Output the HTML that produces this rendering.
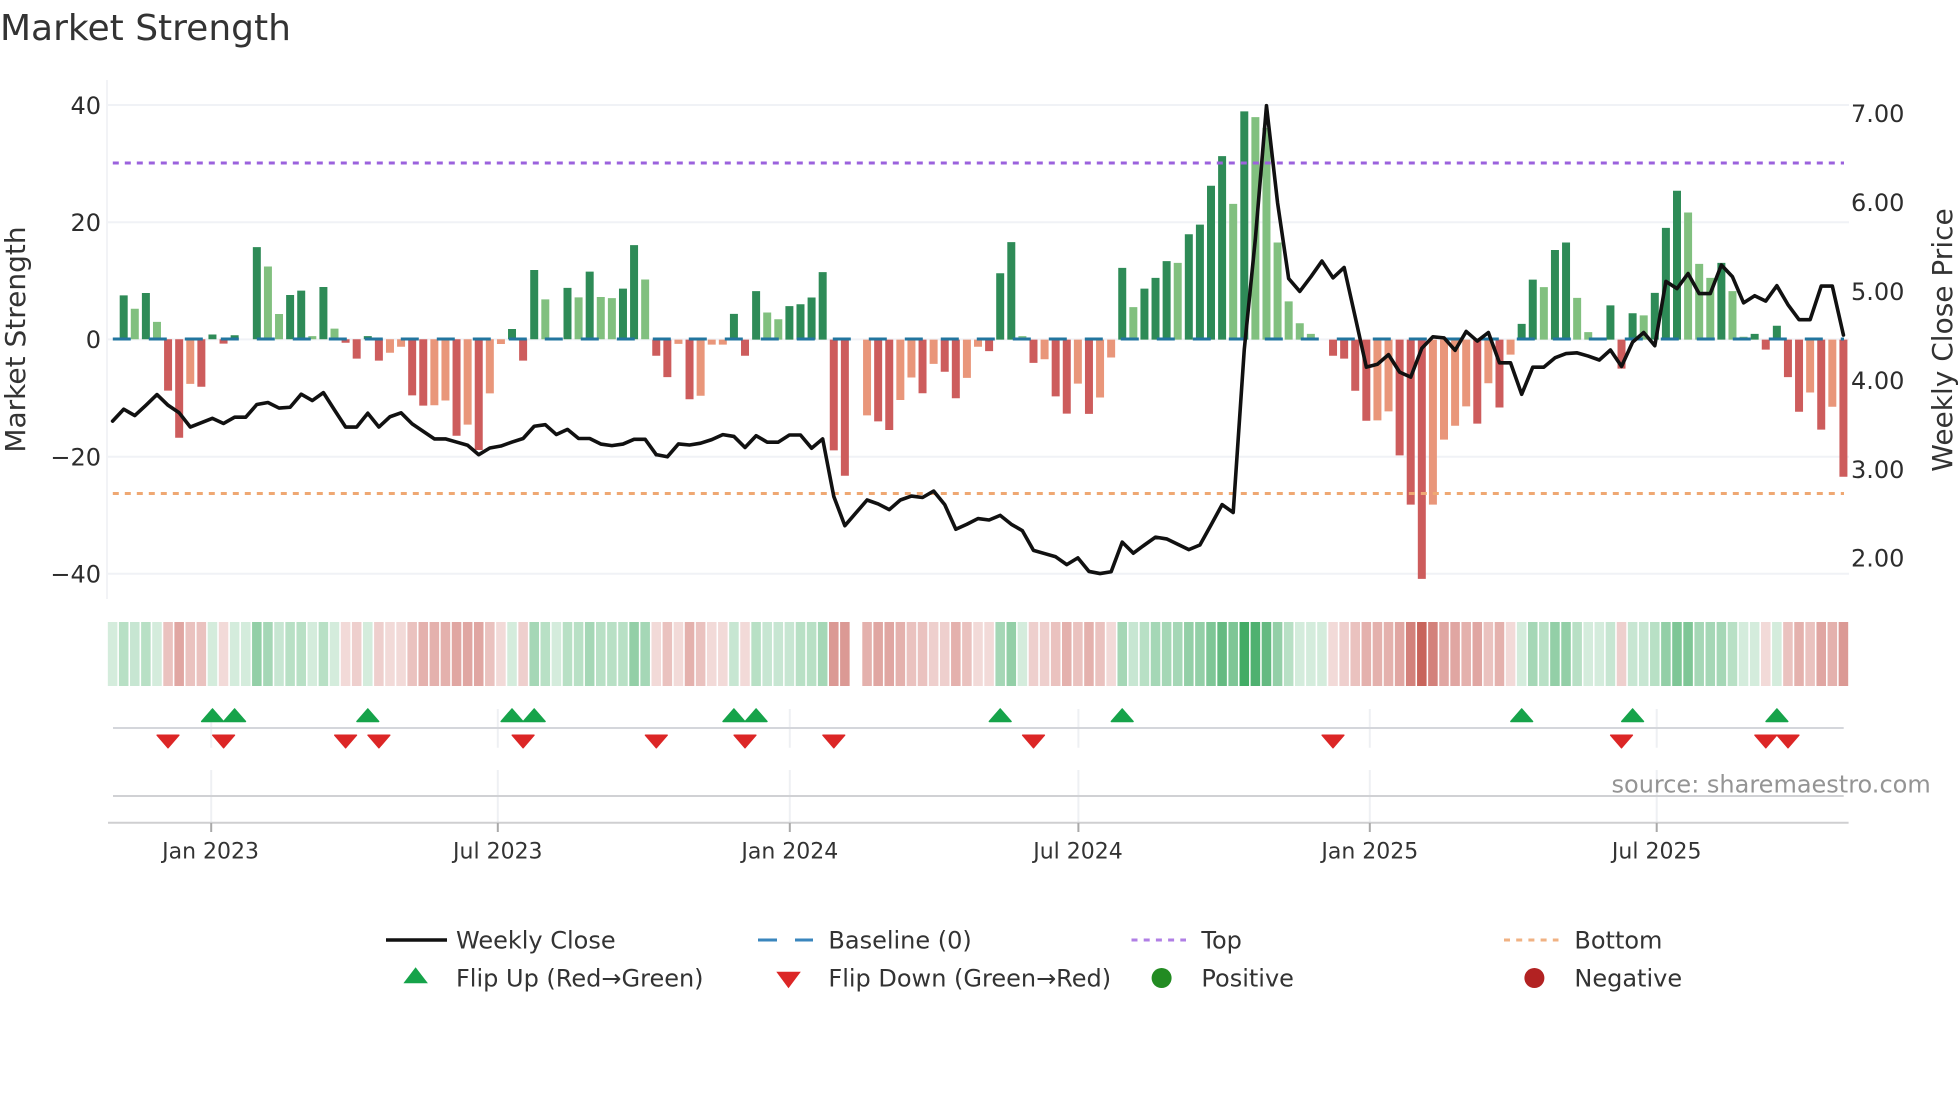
<!DOCTYPE html>
<html>
<head>
<meta charset="utf-8">
<title>Market Strength</title>
<style>
html,body{margin:0;padding:0;background:#fff;width:1960px;height:1102px;overflow:hidden}
svg{display:block}
text{font-family:"DejaVu Sans","Liberation Sans",sans-serif;fill:#2d2d2d}
.t{font-size:24px}
.x{font-size:22px;text-anchor:middle;fill:#333}
.l{font-size:24px;fill:#333}
.b{fill:none;stroke-width:.72}
.h{fill:none;stroke-width:.86}
.p{fill:none;stroke:#111;stroke-width:3.6;stroke-linejoin:round;stroke-linecap:round;vector-effect:non-scaling-stroke}
</style>
</head>
<body>
<svg width="1960" height="1102" viewBox="0 0 1960 1102" xmlns="http://www.w3.org/2000/svg">
<rect width="1960" height="1102" fill="#fff"/>

<!-- grid -->
<path d="M107 80V599" stroke="#f2f3f6" stroke-width="2" fill="none"/>
<path d="M108 105H1849M108 222.2H1849M108 339.4H1849M108 456.7H1849M108 573.8H1849" stroke="#f0f2f6" stroke-width="2" fill="none"/>

<!-- bars A -->
<g transform="matrix(11.095 0 0 .3954 112.6 0)">
<path class="b" stroke="#2e8b57" d="M1 858V747M3 858V741M9 858V846M11 858V848M13 858V625M16 858V746M17 858V735M19 858V726M23 858V850M36 858V832M38 858V683M41 858V728M43 858V687M46 858V730M47 858V620"/>
<path class="b" stroke="#81c07f" d="M2 858V781M4 858V814M14 858V674M15 858V794M18 858V850M20 858V831M39 858V757M42 858V752M44 858V751M45 858V754M48 858V707"/>
<path class="b" stroke="#cd5c5c" d="M5 858V988M6 858V1107M8 858V978M10 858V869M21 858V867M22 858V907M24 858V912M27 858V1000M28 858V1026M31 858V1102M33 858V1138M37 858V912"/>
<path class="b" stroke="#e9967a" d="M7 858V971M25 858V892M26 858V877M29 858V1025M30 858V1013M32 858V1074M34 858V995M35 858V870"/>
</g>
<!-- bars B -->
<g transform="matrix(11.095 0 0 .35714 112.6 60)">
<path class="b" stroke="#2e8b57" d="M56 783V711M58 783V647M61 783V689M62 783V684M63 783V665M64 783V594M80 783V597M81 783V510M91 783V582M93 783V640M94 783V610M95 783V563M97 783V488M98 783V461M99 783V352M100 783V269M102 783V144M127 783V739M128 783V615M130 783V532M131 783V511M135 783V687M137 783V709M139 783V652M140 783V470M141 783V366M145 783V568M148 783V767M150 783V744"/>
<path class="b" stroke="#81c07f" d="M59 783V707M60 783V726M82 783V773M92 783V692M96 783V568M101 783V403M103 783V160M104 783V190M105 783V511M106 783V676M107 783V737M108 783V767M129 783V636M132 783V666M133 783V762M138 783V715M142 783V427M143 783V571M144 783V610M146 783V647M147 783V775"/>
<path class="b" stroke="#cd5c5c" d="M49 783V828M50 783V888M52 783V950M57 783V828M65 783V1093M66 783V1164M69 783V1012M70 783V1036M73 783V933M75 783V873M76 783V947M79 783V815M83 783V848M85 783V942M86 783V990M88 783V991M110 783V828M111 783V836M112 783V926M113 783V1010M116 783V1107M117 783V1245M118 783V1453M123 783V1018M125 783V973M136 783V864M149 783V811M151 783V888M152 783V985M154 783V1035M156 783V1167"/>
<path class="b" stroke="#e9967a" d="M51 783V795M53 783V940M54 783V797M55 783V797M68 783V995M71 783V952M72 783V889M74 783V851M77 783V890M78 783V803M84 783V838M87 783V906M89 783V945M90 783V833M114 783V1009M115 783V984M119 783V1245M120 783V1063M121 783V1024M122 783V970M124 783V905M126 783V825M153 783V931M155 783V971"/>
</g>

<!-- reference lines -->
<path d="M112.8 339H1844" stroke="#22759f" stroke-width="3" stroke-dasharray="18 18" fill="none"/>
<path d="M112.8 163H1844" stroke="#9b62dd" stroke-width="3" stroke-dasharray="6 6" fill="none"/>
<path d="M112.8 493.5H1844" stroke="#efa873" stroke-width="3" stroke-dasharray="6 6" fill="none"/>

<!-- price line -->
<polyline class="p" transform="matrix(11.095 0 0 .3954 112.6 0)" points="0,1065 1,1035 2,1051 3,1025 4,998 5,1025 6,1044 7,1080 8,1069 9,1058 10,1071 11,1055 12,1055 13,1023 14,1018 15,1032 16,1030 17,997 18,1013 19,993 20,1037 21,1080 22,1080 23,1045 24,1080 25,1054 26,1044 27,1072 28,1091 29,1110 30,1110 31,1118 32,1126 33,1150 34,1133 35,1128 36,1118 37,1109 38,1078 39,1074 40,1099 41,1086 42,1109 43,1109 44,1123 45,1127 46,1123 47,1111 48,1111 49,1150"/>
<polyline class="p" transform="matrix(11.095 0 0 .35714 112.6 60)" points="49,1105 50,1111 51,1075 52,1078 53,1073 54,1063 55,1049 56,1054 57,1085 58,1052 59,1070 60,1070 61,1050 62,1050 63,1087 64,1061 65,1222 66,1304 67,1268 68,1232 69,1243 70,1259 71,1232 72,1221 73,1225 74,1207 75,1245 76,1314 77,1300 78,1284 79,1288 80,1275 81,1300 82,1318 83,1373 84,1382 85,1391 86,1413 87,1394 88,1432 89,1438 90,1433 91,1350 92,1381 93,1358 94,1336 95,1341 96,1356 97,1371 98,1358 99,1302 100,1245 101,1267 102,810 103,500 104,128 105,400 106,612 107,648 108,607 109,563 110,610 111,581 112,720 113,860 114,852 115,825 116,874 117,888 118,807 119,775 120,778 121,813 122,760 123,787 124,763 125,848 126,848 127,936 128,860 129,860 130,834 131,822 132,820 133,829 134,840 135,812 136,858 137,790 138,763 139,800 140,620 141,640 142,598 143,654 144,654 145,574 146,607 147,680 148,660 149,675 150,632 151,685 152,727 153,727 154,633 155,633 156,770"/>

<!-- heat strip -->
<g transform="matrix(11.095 0 0 1 112.6 0)">
<path class="h" stroke="rgba(40,160,80,.2)" d="M0 622V686M4 622V686M9 622V686M11 622V686M12 622V686M18 622V686M20 622V686M23 622V686M36 622V686M40 622V686M82 622V686M107 622V686M108 622V686M109 622V686M127 622V686M133 622V686M134 622V686M147 622V686M148 622V686M150 622V686"/>
<path class="h" stroke="rgba(40,160,80,.26)" d="M2 622V686M15 622V686M56 622V686M59 622V686M60 622V686M61 622V686M92 622V686M135 622V686M137 622V686M138 622V686"/>
<path class="h" stroke="rgba(40,160,80,.33)" d="M1 622V686M3 622V686M16 622V686M17 622V686M19 622V686M39 622V686M41 622V686M42 622V686M44 622V686M45 622V686M46 622V686M58 622V686M62 622V686M63 622V686M93 622V686M106 622V686M129 622V686M132 622V686M139 622V686M146 622V686"/>
<path class="h" stroke="rgba(40,160,80,.42)" d="M14 622V686M38 622V686M43 622V686M48 622V686M64 622V686M80 622V686M91 622V686M94 622V686M95 622V686M96 622V686M128 622V686M143 622V686M144 622V686M145 622V686"/>
<path class="h" stroke="rgba(40,160,80,.5)" d="M13 622V686M47 622V686M81 622V686M97 622V686M98 622V686M105 622V686M130 622V686M131 622V686M140 622V686"/>
<path class="h" stroke="rgba(40,160,80,.6)" d="M99 622V686M101 622V686M141 622V686M142 622V686"/>
<path class="h" stroke="rgba(40,160,80,.72)" d="M100 622V686M104 622V686"/>
<path class="h" stroke="rgba(40,160,80,.88)" d="M102 622V686"/>
<path class="h" stroke="rgba(40,160,80,.82)" d="M103 622V686"/>
<path class="h" stroke="rgba(190,70,60,.2)" d="M10 622V686M21 622V686M25 622V686M26 622V686M35 622V686M49 622V686M51 622V686M54 622V686M55 622V686M57 622V686M78 622V686M79 622V686M90 622V686M110 622V686M126 622V686M149 622V686"/>
<path class="h" stroke="rgba(190,70,60,.26)" d="M22 622V686M24 622V686M37 622V686M74 622V686M75 622V686M83 622V686M84 622V686M111 622V686M136 622V686"/>
<path class="h" stroke="rgba(190,70,60,.33)" d="M5 622V686M7 622V686M8 622V686M27 622V686M34 622V686M50 622V686M53 622V686M72 622V686M73 622V686M77 622V686M85 622V686M87 622V686M89 622V686M112 622V686M124 622V686M151 622V686M153 622V686"/>
<path class="h" stroke="rgba(190,70,60,.42)" d="M28 622V686M29 622V686M30 622V686M52 622V686M68 622V686M71 622V686M76 622V686M86 622V686M88 622V686M113 622V686M114 622V686M115 622V686M122 622V686M125 622V686M152 622V686M155 622V686"/>
<path class="h" stroke="rgba(190,70,60,.48)" d="M6 622V686M31 622V686M32 622V686M33 622V686M69 622V686M70 622V686M116 622V686M120 622V686M121 622V686M123 622V686M154 622V686"/>
<path class="h" stroke="rgba(190,70,60,.55)" d="M65 622V686M66 622V686M156 622V686"/>
<path class="h" stroke="rgba(190,70,60,.68)" d="M117 622V686M119 622V686"/>
<path class="h" stroke="rgba(190,70,60,.84)" d="M118 622V686"/>
</g>

<!-- lower panels -->
<path d="M211.2 709V747.7M497.8 709V747.7M789.8 709V747.7M1078.4 709V747.7M1369.8 709V747.7M1656.7 709V747.7M211.2 770V822M497.8 770V822M789.8 770V822M1078.4 770V822M1369.8 770V822M1656.7 770V822" stroke="#eef0f3" stroke-width="2" fill="none"/>
<path d="M113 728H1843.7" stroke="#d4d6db" stroke-width="2" fill="none"/>
<path d="M113 796H1843.7" stroke="#d0d1d4" stroke-width="2" fill="none"/>
<path d="M108 822.7H1848.6" stroke="#cfcfd1" stroke-width="2" fill="none"/>
<path d="M211.2 823V832M497.8 823V832M789.8 823V832M1078.4 823V832M1369.8 823V832M1656.7 823V832" stroke="#a9a9a9" stroke-width="2" fill="none"/>

<!-- flip markers -->
<path fill="#16a34a" stroke="#16a34a" stroke-width="1.4" stroke-linejoin="round" d="M201.6 721.5l10.9-12.6 10.9 12.6zM223.7 721.5l10.9-12.6 10.9 12.6zM356.9 721.5l10.9-12.6 10.9 12.6zM501.1 721.5l10.9-12.6 10.9 12.6zM523.3 721.5l10.9-12.6 10.9 12.6zM723 721.5l10.9-12.6 10.9 12.6zM745.2 721.5l10.9-12.6 10.9 12.6zM989.3 721.5l10.9-12.6 10.9 12.6zM1111.3 721.5l10.9-12.6 10.9 12.6zM1510.8 721.5l10.9-12.6 10.9 12.6zM1621.7 721.5l10.9-12.6 10.9 12.6zM1766 721.5l10.9-12.6 10.9 12.6z"/>
<path fill="#dc2626" stroke="#dc2626" stroke-width="1.4" stroke-linejoin="round" d="M157.1 735.2l10.9 12.6 10.9-12.6zM212.7 735.2l10.9 12.6 10.9-12.6zM334.7 735.2l10.9 12.6 10.9-12.6zM368 735.2l10.9 12.6 10.9-12.6zM512.2 735.2l10.9 12.6 10.9-12.6zM645.4 735.2l10.9 12.6 10.9-12.6zM734.1 735.2l10.9 12.6 10.9-12.6zM822.9 735.2l10.9 12.6 10.9-12.6zM1022.6 735.2l10.9 12.6 10.9-12.6zM1322.1 735.2l10.9 12.6 10.9-12.6zM1610.6 735.2l10.9 12.6 10.9-12.6zM1754.9 735.2l10.9 12.6 10.9-12.6zM1777.1 735.2l10.9 12.6 10.9-12.6z"/>

<!-- titles -->
<text x="0" y="40" style="font-size:36px;fill:#333">Market Strength</text>
<text transform="translate(25 339.5) rotate(-90)" text-anchor="middle" style="font-size:28px;fill:#333">Market Strength</text>
<text transform="translate(1952 340) rotate(-90)" text-anchor="middle" style="font-size:28px;fill:#333">Weekly Close Price</text>

<!-- left ticks -->
<g class="t" text-anchor="end">
<text x="101" y="114" class="t">40</text>
<text x="101" y="231" class="t">20</text>
<text x="101" y="348" class="t">0</text>
<text x="101" y="465.5" class="t">−20</text>
<text x="101" y="582.5" class="t">−40</text>
</g>
<!-- right ticks -->
<text x="1851" y="122" class="t">7.00</text>
<text x="1851" y="211" class="t">6.00</text>
<text x="1851" y="300" class="t">5.00</text>
<text x="1851" y="389" class="t">4.00</text>
<text x="1851" y="478" class="t">3.00</text>
<text x="1851" y="566.5" class="t">2.00</text>

<!-- x ticks -->
<text x="210.6" y="858.5" class="x">Jan 2023</text>
<text x="497.8" y="858.5" class="x">Jul 2023</text>
<text x="789.8" y="858.5" class="x">Jan 2024</text>
<text x="1078" y="858.5" class="x">Jul 2024</text>
<text x="1369.8" y="858.5" class="x">Jan 2025</text>
<text x="1656.7" y="858.5" class="x">Jul 2025</text>

<!-- watermark -->
<text x="1611.5" y="792.5" style="font-size:24px;fill:#949494">source: sharemaestro.com</text>

<!-- legend -->
<path d="M386 940H447" stroke="#111" stroke-width="3.6" fill="none"/>
<text x="456" y="948.5" class="l">Weekly Close</text>
<path d="M758 940H777M795 940H813" stroke="#3a86bd" stroke-width="3" fill="none"/>
<text x="828.4" y="948.5" class="l">Baseline (0)</text>
<path d="M1131.5 940H1186" stroke="#b07fe5" stroke-width="3" stroke-dasharray="6 6.2" fill="none"/>
<text x="1201.4" y="948.5" class="l">Top</text>
<path d="M1504 940H1558.5" stroke="#f0b283" stroke-width="3" stroke-dasharray="6 6.2" fill="none"/>
<text x="1574.4" y="948.5" class="l">Bottom</text>

<path fill="#16a34a" d="M403.4 983.3L415.6 967.3L427.9 983.3z"/>
<text x="456" y="986.6" class="l">Flip Up (Red→Green)</text>
<path fill="#dc2626" d="M776.3 971.7L788.5 988.3L800.8 971.7z"/>
<text x="828.4" y="986.6" class="l">Flip Down (Green→Red)</text>
<circle cx="1161.6" cy="978" r="10" fill="#228b22"/>
<text x="1201.4" y="986.6" class="l">Positive</text>
<circle cx="1534.4" cy="978" r="10" fill="#b22222"/>
<text x="1574.4" y="986.6" class="l">Negative</text>
</svg>
</body>
</html>
